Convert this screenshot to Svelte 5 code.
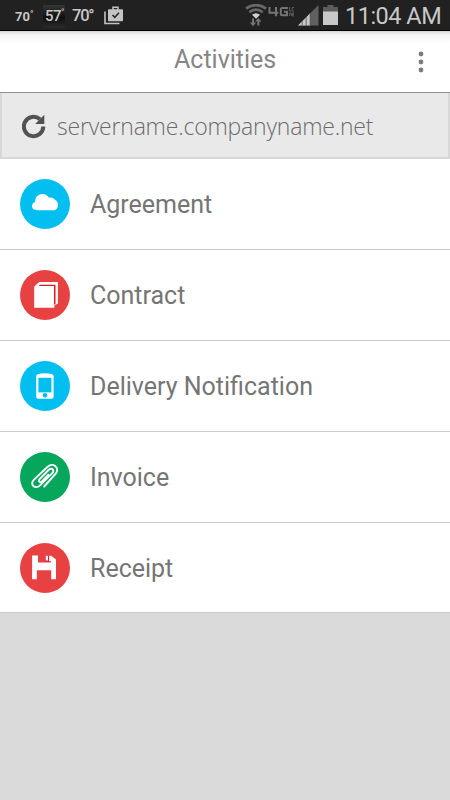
<script>
  const activities = [
    { name: 'Agreement', icon: 'cloud', color: '#03bff0' },
    { name: 'Contract', icon: 'pages', color: '#e84142' },
    { name: 'Delivery Notification', icon: 'phone', color: '#03bff0' },
    { name: 'Invoice', icon: 'clip', color: '#06a65c' },
    { name: 'Receipt', icon: 'disk', color: '#e84142' },
  ];
</script>

<div class="screen">
  <div class="status">
    <span class="temp small">70<sup>°</sup></span>
    <span class="temp boxed">57<sup>°</sup></span>
    <span class="temp large">70°</span>
    <svg class="bag" width="20" height="19" viewBox="0 0 20 19">
      <path d="M1 5.5V17.5H15.5" fill="none" stroke="#c4c4c4" stroke-width="1.6" />
      <path d="M9 4V1.2H14V4" fill="none" stroke="#c4c4c4" stroke-width="1.5" />
      <rect x="4" y="3.3" width="15" height="12" rx="0.8" fill="#c4c4c4" />
      <path d="M8.5 9l2.3 2.3 4.2-4.6" fill="none" stroke="#262626" stroke-width="1.5" />
    </svg>

    <svg class="radio" width="49" height="23" viewBox="0 0 49 23">
      <g fill="none" stroke="#686868" stroke-width="2.7">
        <path d="M1 4.7Q11 -2.6 21 4.7" />
        <path d="M4.3 8.3Q11 3 17.7 8.3" />
      </g>
      <path d="M7 10.8Q11 7.6 15 10.8L11 14.8Z" fill="#d2d2d2" />
      <path d="M8 22.2L4.8 18.6H7V14.5H9V18.6H11.2Z M13.3 14L16.5 17.6H14.3V21.5H12.3V17.6H10.1Z" fill="#767676" />
      <g fill="none" stroke="#747474" stroke-width="2">
        <path d="M24.5 3V8.7H33.3M31 3V12.2" />
        <path d="M43 4H37.3Q35.8 4 35.8 5.5V9.7Q35.8 11.2 37.3 11.2H42V7.8H39" />
      </g>
      <path d="M44.5 3V7H46.2M49 3.5H47.2V7H49M44.5 12V9H46.2V12M49 9H47.2V12H49M47.2 10.5H49" fill="none" stroke="#6c6c6c" stroke-width="0.8" />
    </svg>
    <svg class="signal" width="21" height="21" viewBox="0 0 21 21">
      <path d="M0 20.5L20.5 0V20.5Z" fill="#606060" />
      <path d="M0 20.5L12 8.5V20.5Z" fill="#c6c6c6" />
      <path d="M4.2 16V21M8.2 12V21M12.2 8V21" stroke="#555" stroke-width="0.8" />
    </svg>
    <svg class="battery" width="15" height="20" viewBox="0 0 15 20">
      <path d="M0 2H4.5V0H10.5V2H15V20H0Z" fill="#5c5c5c" />
      <path d="M0 6.5H15V20H0Z" fill="#c8c8c8" />
    </svg>
    <span class="clock">11:04 AM</span>
  </div>

  <header>
    <h1>Activities</h1>
    <button type="button" class="more" aria-label="More options">
      <svg width="6" height="22" viewBox="0 0 6 22" fill="#7b7b7b">
        <circle cx="3" cy="3" r="2.4" />
        <circle cx="3" cy="11" r="2.4" />
        <circle cx="3" cy="19" r="2.4" />
      </svg>
    </button>
  </header>

  <div class="server">
    <svg width="24" height="25" viewBox="0 0 24 25">
      <path d="M21.3 12.6A9.7 9.7 0 1 1 18 5.2" fill="none" stroke="#525252" stroke-width="4" />
      <path d="M22.3 0.8V10H13.1Z" fill="#525252" />
    </svg>
    <span>servername.companyname.net</span>
  </div>

  <ul>
    {#each activities as { name, icon, color } (name)}
      <li>
        <svg class="icon" width="50" height="50" viewBox="0 0 50 50">
          <circle cx="25" cy="25" r="25" fill={color} />
          {#if icon === 'cloud'}
            <path d="M17.2 31.3C14.2 31.3 12 29.6 12 27.1C12 25 13.3 23.5 15.2 23C14.8 18.5 18 14.9 22.2 14.9C25.4 14.9 27.8 16.3 28.9 18.8C31.2 18.2 33.6 18.9 34.6 20.6C37 21.4 38 23.9 38 26C38 29.4 36 31.3 33 31.3Z" fill="#fff" />
          {:else if icon === 'pages'}
            <path d="M14.2 16.7L19 12.1H37.9V33.6L34.4 35.5V37.7H14.2Z" fill="#fff" />
            <path d="M20 14.7H35.5V34.6H34V16H18.6Z" fill="#e01925" />
          {:else if icon === 'phone'}
            <path d="M16.2 15.2Q16.2 13.8 17.6 13.3Q25 11.2 32.2 13.3Q33.6 13.8 33.6 15.2V35.8Q33.6 37.8 31.7 37.8H18.1Q16.2 37.8 16.2 35.8Z" fill="#fff" />
            <rect x="18.4" y="16.8" width="13" height="14.6" fill={color} />
            <circle cx="25" cy="34.3" r="2.2" fill={color} />
          {:else if icon === 'clip'}
            <path d="M24.2 34.5L35.7 21.7C38.2 18.8 37.3 15.8 35.3 14.1C33 12.2 29.7 12.7 27.6 14.8L13.8 27.9C11.7 30 11.8 32.5 13.4 34C15.3 35.7 18.2 35.2 20 33.4L32.3 21.1C33.7 19.6 33.6 18.2 32.6 17.3C31.5 16.4 30 16.7 28.8 17.8L19.6 27.1C18.7 28.1 18.8 29.3 19.5 29.8C20.3 30.4 21.3 30 22.1 29.2L28.4 22.7" fill="none" stroke="#fff" stroke-width="1.9" stroke-linecap="round" />
          {:else}
            <path d="M12.1 12.6H18V19.6H31V12.6L36 16.5V36.2H31.2V27.2H16.8V36.2H12.1Z" fill="#fff" />
            <path d="M24.8 12.8H31V18.2H24.8Z" fill="#fff" />
            <path d="M25.1 12.8V18.2H28.5V12.8" fill="none" stroke="#dc1d2a" stroke-width="1.2" />
          {/if}
        </svg>
        <span>{name}</span>
      </li>
    {/each}
  </ul>
</div>

<style>
  :global(body) {
    margin: 0;
    background: #dadada;
  }

  .screen {
    width: 450px;
    height: 800px;
    overflow: hidden;
    font-family: Roboto, sans-serif;
    background: #dadada;
  }

  .status {
    box-sizing: border-box;
    display: flex;
    align-items: flex-start;
    height: 31px;
    border-bottom: 1px solid #000;
    background: #212121;
    color: #c8c8c8;
    white-space: nowrap;
  }

  .temp {
    flex: none;
    font-weight: 500;
    line-height: 20px;
  }

  .temp sup {
    font-size: 9px;
    line-height: 0;
    vertical-align: 4px;
  }

  .small {
    width: 28px;
    margin: 7px 0 0 15px;
    font-size: 13px;
    font-weight: 700;
  }

  .boxed {
    box-sizing: border-box;
    width: 22px;
    height: 23px;
    padding: 1px 0 0 2px;
    margin-top: 5px;
    font-size: 15px;
    letter-spacing: -0.5px;
    background: linear-gradient(#363636, #101010 55%, #2b2b2b);
  }

  .boxed sup {
    vertical-align: 6px;
  }

  .large {
    width: 22px;
    margin: 6px 0 0 7px;
    font-size: 16.5px;
    letter-spacing: -1.2px;
  }

  .bag {
    flex: none;
    margin: 6px 0 0 10px;
  }

  .radio {
    flex: none;
    margin: 4px 0 0 121px;
  }

  .signal {
    flex: none;
    margin: 5px 0 0 4px;
  }

  .battery {
    flex: none;
    margin: 5px 0 0 4px;
  }

  .clock {
    flex: none;
    margin: 1px 0 0 7px;
    font-size: 23.5px;
    font-weight: 400;
    line-height: 30px;
    letter-spacing: -0.5px;
  }

  header {
    box-sizing: border-box;
    display: flex;
    align-items: flex-start;
    height: 62px;
    padding-left: 174px;
    border-bottom: 1px solid #8f8f8f;
    background: linear-gradient(#d4d4d4, #f1f1f1 3px, #fafafa 8px, #fff 14px);
    color: #858585;
  }

  h1 {
    flex: 1;
    margin: 14px 0 0;
    font-size: 25px;
    font-weight: 400;
    line-height: 30px;
  }

  .more {
    display: flex;
    margin: 20px 26px 0 0;
    padding: 0;
    border: 0;
    background: none;
  }

  .server {
    box-sizing: border-box;
    display: flex;
    align-items: center;
    gap: 11px;
    height: 66px;
    padding: 2px 0 0 20px;
    border: 2px solid #d8d8d8;
    border-top: 0;
    background: #e9e9e9;
    color: #6c6c6c;
    font-family: "Open Sans", sans-serif;
    font-size: 23px;
    font-weight: 300;
    line-height: 30px;
    letter-spacing: -0.2px;
  }

  ul {
    margin: 0;
    padding: 0;
    list-style: none;
  }

  li {
    box-sizing: border-box;
    display: flex;
    align-items: center;
    gap: 20px;
    height: 91px;
    padding-left: 20px;
    border-bottom: 1px solid #cbcbcb;
    background: #fff;
    color: #757575;
    font-size: 25px;
    line-height: 32px;
  }

  li:last-child {
    height: 90px;
  }

  li span {
    padding-top: 2px;
  }
</style>
